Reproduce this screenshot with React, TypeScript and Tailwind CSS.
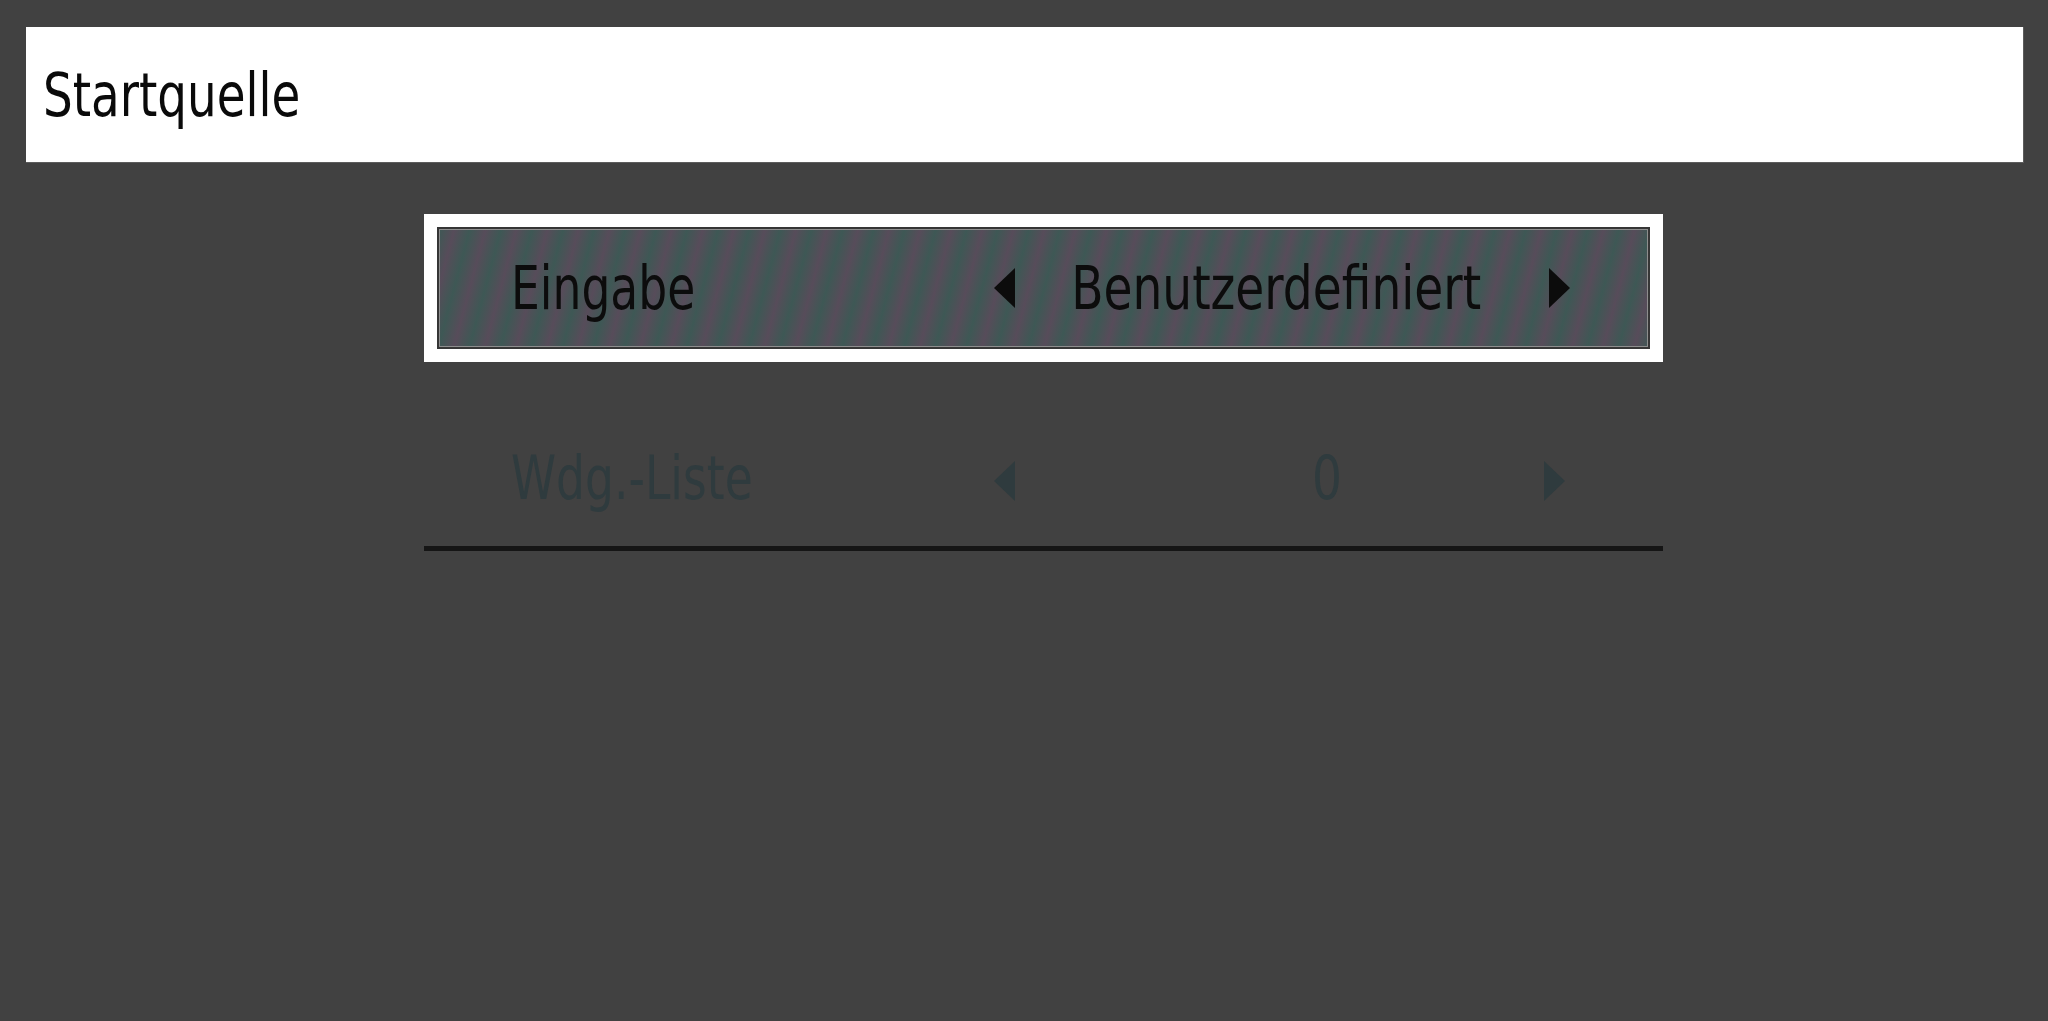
import React from "react";

interface Row_I {
  label: string;
  value: string;
  active?: boolean;
}

const rows: Row_I[] = [
  { label: "Eingabe", value: "Benutzerdefiniert", active: true },
  { label: "Wdg.-Liste", value: "0" },
];

function Arrow({ dir, className }: { dir: "left" | "right"; className?: string }) {
  return (
    <svg width="21" height="40" viewBox="0 0 21 40" className={className}>
      {dir === "left" ? (
        <polygon points="21,0 21,40 0,20" fill="currentColor" />
      ) : (
        <polygon points="0,0 0,40 21,20" fill="currentColor" />
      )}
    </svg>
  );
}

function MenuRow({ row }: { row: Row_I }) {
  const inner = (
    <div
      className={`${
        row.active ? "h-[118px]" : "h-[122px]"
      } flex flex-row items-center pl-[72px] pr-[83px]`}
    >
      <div className="w-[483px] shrink-0">
        <span className="inline-block origin-left scale-x-[0.76] whitespace-nowrap">
          {row.label}
        </span>
      </div>
      <Arrow dir="left" className={row.active ? "shrink-0" : "shrink-0 mt-[6px]"} />
      <div className="flex-1 flex justify-center pr-[12px]">
        <span
          className={`inline-block origin-center scale-x-[0.785] whitespace-nowrap ${
            row.active ? "" : "ml-[108px]"
          }`}
        >
          {row.value}
        </span>
      </div>
      <Arrow dir="right" className={row.active ? "shrink-0" : "shrink-0 mt-[6px]"} />
    </div>
  );

  if (row.active) {
    return (
      <div className="bg-white p-[13px] text-[#0c0c0c]">
        <div className="border-2 border-[#363636] shadow-[inset_0_0_0_1px_#8e8e8e] bg-[repeating-linear-gradient(105deg,#3e5855_0px,#4b5257_8px,#574c5a_15px,#4b5257_22px,#3e5855_30px)]">
          {inner}
        </div>
      </div>
    );
  }

  return (
    <div className="pt-[55px] pb-[7px] border-b-[5px] border-[#151515] text-[#2f3b3e]">
      <div className="px-[15px]">{inner}</div>
    </div>
  );
}

export default function App() {
  return (
    <div
      className="w-full h-screen bg-[#414141] pt-[27px] text-[60px] leading-none"
      style={{ fontFamily: '"DejaVu Sans", "Liberation Sans", sans-serif' }}
    >
      <div className="ml-[26px] mr-[24px] h-[136px] bg-white border-r border-b border-[#5c5c5c] pt-[38px] pl-[17px] text-[#0a0a0a]">
        <span className="inline-block origin-left scale-x-[0.78] whitespace-nowrap">
          Startquelle
        </span>
      </div>
      <div className="w-[1239px] ml-[424px] mt-[51px] flex flex-col">
        {rows.map((row: Row_I, index: number) => (
          <MenuRow row={row} key={index} />
        ))}
      </div>
    </div>
  );
}
